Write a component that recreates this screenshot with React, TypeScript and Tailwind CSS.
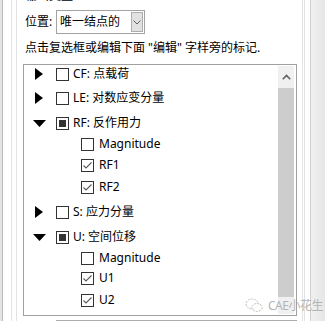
import React from "react";

type Row = {
  level: 0 | 1;
  label: string;
  mt: number;
  expand?: "right" | "down";
  state: "none" | "checked" | "partial";
};

const rows: Row[] = [
  { level: 0, label: "CF: 点载荷", mt: 0, expand: "right", state: "none" },
  { level: 0, label: "LE: 对数应变分量", mt: 6, expand: "right", state: "none" },
  { level: 0, label: "RF: 反作用力", mt: 7, expand: "down", state: "partial" },
  { level: 1, label: "Magnitude", mt: 3, state: "none" },
  { level: 1, label: "RF1", mt: 3, state: "checked" },
  { level: 1, label: "RF2", mt: 4, state: "checked" },
  { level: 0, label: "S: 应力分量", mt: 7, expand: "right", state: "none" },
  { level: 0, label: "U: 空间位移", mt: 7, expand: "down", state: "partial" },
  { level: 1, label: "Magnitude", mt: 3, state: "none" },
  { level: 1, label: "U1", mt: 2, state: "checked" },
  { level: 1, label: "U2", mt: 4, state: "checked" },
];

const mtClass: Record<number, string> = {
  0: "mt-0",
  2: "mt-[2px]",
  3: "mt-[3px]",
  4: "mt-[4px]",
  6: "mt-[6px]",
  7: "mt-[7px]",
};

function Check({ state }: { state: Row["state"] }) {
  return (
    <div className="flex h-[13px] w-[13px] shrink-0 items-center justify-center border border-[#333333] bg-white">
      {state === "partial" && <div className="h-[7px] w-[7px] bg-[#333333]" />}
      {state === "checked" && (
        <svg width="11" height="11" viewBox="0 0 11 11">
          <path d="M1.5 5.5 L4 8 L9.5 2.5" fill="none" stroke="#5a5a5a" strokeWidth="1.1" />
        </svg>
      )}
    </div>
  );
}

function Arrow({ dir }: { dir?: "right" | "down" }) {
  return (
    <div className="flex h-[18px] w-[16px] shrink-0 items-center justify-center">
      {dir === "right" && (
        <svg width="8" height="12" viewBox="0 0 8 12">
          <path d="M0 0 L8 6 L0 12 Z" fill="#000" />
        </svg>
      )}
      {dir === "down" && (
        <svg width="13" height="7" viewBox="0 0 13 7">
          <path d="M0 0 L13 0 L6.5 7 Z" fill="#000" />
        </svg>
      )}
    </div>
  );
}

export default function App() {
  return (
    <div className="relative flex h-[321px] w-[325px] overflow-hidden bg-white text-[12px] text-black font-['Noto_Sans','Noto_Sans_CJK_SC',sans-serif]">
      {/* left frame */}
      <div className="w-[2px] shrink-0 bg-[#e4e4e4]" />
      <div className="w-px shrink-0 bg-[#b9b9b9]" />
      <div className="w-[8px] shrink-0" />
      <div className="w-px shrink-0 bg-[#e3e3e3]" />
      <div className="w-[4px] shrink-0" />
      <div className="w-px shrink-0 bg-[#e3e3e3]" />

      {/* main */}
      <div className="flex w-[280px] shrink-0 flex-col">
        <div className="-mt-[12px] h-[16px] pl-[8px] leading-[16px]">输出变量</div>
        <div className="mt-[6px] flex h-[24px] items-center pl-[8px]">
          <span className="w-[31px] leading-[16px]">位置:</span>
          <div className="flex h-[24px] w-[89px] items-center justify-between border border-[#a3a3a3] bg-white pl-[3px] pr-px">
            <span className="leading-[16px]">唯一结点的</span>
            <div className="flex h-[20px] w-[12px] items-center justify-center border border-[#adadad] bg-[#e1e1e1]">
              <svg width="8" height="5" viewBox="0 0 8 5">
                <path d="M0.5 0.5 L4 4 L7.5 0.5" fill="none" stroke="#606060" strokeWidth="1" />
              </svg>
            </div>
          </div>
        </div>
        <div className="mt-[6px] h-[16px] pl-[8px] leading-[16px] whitespace-nowrap">
          点击复选框或编辑下面 "编辑" 字样旁的标记.
        </div>

        <div className="ml-[6px] mt-[8px] flex h-[252px] w-[274px] border border-[#a0a0a0] bg-white">
          <div className="flex flex-1 flex-col">
            {rows.map((r, i) => (
              <div
                key={i}
                className={`flex h-[18px] items-center ${mtClass[r.mt]} ${
                  r.level === 0 ? "pl-[7px]" : "pl-[57px]"
                }`}
              >
                {r.level === 0 && (
                  <>
                    <Arrow dir={r.expand} />
                    <div className="w-[9px] shrink-0" />
                  </>
                )}
                <Check state={r.state} />
                <span className={`${r.level === 0 ? "ml-[4px]" : "ml-[5px]"} leading-[18px] whitespace-nowrap`}>
                  {r.label}
                </span>
              </div>
            ))}
          </div>
          {/* scrollbar */}
          <div className="flex w-[18px] flex-col py-px pl-0 pr-[2px]">
            <div className="flex h-[22px] w-[16px] items-center justify-center bg-[#f0f0f0]">
              <svg width="9" height="6" viewBox="0 0 9 6">
                <path d="M0.8 5.2 L4.5 1.5 L8.2 5.2" fill="none" stroke="#606060" strokeWidth="1.6" />
              </svg>
            </div>
            <div className="h-[209px] w-[16px] bg-[#cdcdcd]" />
            <div className="flex-1 w-[16px] bg-[#f0f0f0]" />
          </div>
        </div>
        <div className="ml-[39px] mt-[4px] h-px w-[241px] bg-[#adadad]" />
      </div>

      {/* right frame */}
      <div className="w-[5px] shrink-0" />
      <div className="w-px shrink-0 bg-[#e3e3e3]" />
      <div className="w-px shrink-0" />
      <div className="w-px shrink-0 bg-[#e3e3e3]" />
      <div className="w-[5px] shrink-0" />
      <div className="w-px shrink-0 bg-[#d0d0d0]" />
      <div className="flex-1 bg-gradient-to-r from-[#f0f0f0] to-[#e6e6e6]" />

      {/* watermark */}
      <div className="pointer-events-none absolute left-[245px] top-[298px] flex items-center gap-[5px] text-[12px] leading-[14px] text-[#b4b4b4]">
        <svg width="18" height="15" viewBox="0 0 18 15">
          <ellipse cx="7" cy="6" rx="6" ry="5" fill="none" stroke="#c0c0c0" strokeWidth="1" strokeDasharray="2 1" />
          <ellipse cx="12" cy="9.5" rx="5" ry="4" fill="rgba(255,255,255,0.8)" stroke="#c0c0c0" strokeWidth="1" strokeDasharray="2 1" />
        </svg>
        <span className="tracking-[-0.5px]">CAE小花生</span>
      </div>
    </div>
  );
}
